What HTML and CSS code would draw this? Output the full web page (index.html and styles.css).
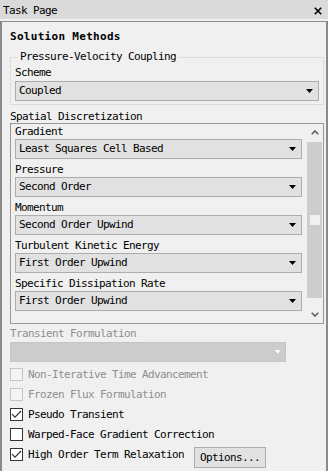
FILE: index.html
```html
<!DOCTYPE html>
<html>
<head>
<meta charset="utf-8">
<link rel="stylesheet" href="styles.css">
</head>
<body>
<div class="titlebar">
  <span class="title">Task Page</span>
  <svg class="close" width="8" height="8" viewBox="0 0 8 8"><path d="M0.8 0.8 L7.2 7.2 M7.2 0.8 L0.8 7.2" stroke="#000" stroke-width="1.6" fill="none"/></svg>
</div>
<div class="panel">
  <div class="heading">Solution Methods</div>
  <fieldset class="group">
    <legend class="legend">Pressure-Velocity Coupling</legend>
    <div class="label first">Scheme</div>
    <div class="combo"><span class="combo-text">Coupled</span><svg class="arrow" width="7" height="4" viewBox="0 0 7 4"><polygon points="0,0 7,0 3.5,4" fill="#000"/></svg></div>
  </fieldset>
  <div class="section-label">Spatial Discretization</div>
  <div class="frame">
    <div class="frame-content">
      <div class="label first">Gradient</div>
      <div class="combo"><span class="combo-text">Least Squares Cell Based</span><svg class="arrow" width="7" height="4" viewBox="0 0 7 4"><polygon points="0,0 7,0 3.5,4" fill="#000"/></svg></div>
      <div class="label">Pressure</div>
      <div class="combo"><span class="combo-text">Second Order</span><svg class="arrow" width="7" height="4" viewBox="0 0 7 4"><polygon points="0,0 7,0 3.5,4" fill="#000"/></svg></div>
      <div class="label">Momentum</div>
      <div class="combo"><span class="combo-text">Second Order Upwind</span><svg class="arrow" width="7" height="4" viewBox="0 0 7 4"><polygon points="0,0 7,0 3.5,4" fill="#000"/></svg></div>
      <div class="label">Turbulent Kinetic Energy</div>
      <div class="combo"><span class="combo-text">First Order Upwind</span><svg class="arrow" width="7" height="4" viewBox="0 0 7 4"><polygon points="0,0 7,0 3.5,4" fill="#000"/></svg></div>
      <div class="label">Specific Dissipation Rate</div>
      <div class="combo"><span class="combo-text">First Order Upwind</span><svg class="arrow" width="7" height="4" viewBox="0 0 7 4"><polygon points="0,0 7,0 3.5,4" fill="#000"/></svg></div>
    </div>
    <div class="scrollbar">
      <div class="sb-btn"><svg width="8" height="5" viewBox="0 0 8 5"><path d="M0.7 4.3 L4 1 L7.3 4.3" stroke="#606060" stroke-width="1.6" fill="none"/></svg></div>
      <div class="thumb"><div class="grip"></div></div>
      <div class="sb-space"></div>
      <div class="sb-btn"><svg width="8" height="5" viewBox="0 0 8 5"><path d="M0.7 0.7 L4 4 L7.3 0.7" stroke="#606060" stroke-width="1.6" fill="none"/></svg></div>
    </div>
  </div>
  <div class="label disabled-text after-frame">Transient Formulation</div>
  <div class="combo combo-disabled"><span class="combo-text"></span><svg class="arrow" width="8" height="5" viewBox="0 0 8 5"><polygon points="0,0 8,0 4,4.5" fill="#b4b4b4"/><polygon points="1,0 8,0 4.5,4" fill="#fafafa"/></svg></div>
  <div class="checks">
    <div class="check-row"><span class="box box-disabled"></span><span class="check-text disabled-text">Non-Iterative Time Advancement</span></div>
    <div class="check-row"><span class="box box-disabled"></span><span class="check-text disabled-text">Frozen Flux Formulation</span></div>
    <div class="check-row"><span class="box"><svg width="11" height="11" viewBox="0 0 11 11"><path d="M1 5.2 L4 8.2 L10 2" stroke="#333" stroke-width="1.2" fill="none"/></svg></span><span class="check-text">Pseudo Transient</span></div>
    <div class="check-row"><span class="box"></span><span class="check-text">Warped-Face Gradient Correction</span></div>
    <div class="check-row"><span class="box"><svg width="11" height="11" viewBox="0 0 11 11"><path d="M1 5.2 L4 8.2 L10 2" stroke="#333" stroke-width="1.2" fill="none"/></svg></span><span class="check-text">High Order Term Relaxation</span><span class="button">Options...</span></div>
  </div>
</div>
</body>
</html>
```
FILE: styles.css
```css
* { box-sizing: border-box; }
html, body { margin: 0; padding: 0; }
body {
  width: 328px;
  height: 471px;
  overflow: hidden;
  background: #f0f0f0;
  font-family: "DejaVu Sans Mono", "Liberation Mono", monospace;
  font-size: 11px;
  letter-spacing: -0.623px;
  color: #000;
}
.titlebar {
  height: 19px;
  background: #dadada;
  display: flex;
  justify-content: space-between;
  align-items: flex-start;
  padding: 4px 6px 0 3px;
  line-height: 14px;
}
.close { margin-top: 3px; }
.panel {
  margin-top: 2px;
  border-top: 1px solid #8a8a8a;
  border-left: 2px solid #8a8a8a;
  border-right: 2px solid #8a8a8a;
  height: 450px;
  padding: 0 2px 0 8px;
}
.heading {
  margin-top: 8px;
  height: 14px;
  line-height: 14px;
  font-weight: bold;
  letter-spacing: 0.3px;
}
.group {
  margin: 6px 0 0 0;
  padding: 0 4px 3px 4px;
  border: 1px solid #dcdcdc;
  min-width: 0;
}
.legend {
  padding: 0 3px;
  margin-left: 2px;
  line-height: 14px;
}
.label {
  height: 14px;
  line-height: 14px;
  margin-top: 4px;
  white-space: nowrap;
}
.group .label.first { margin-top: 2px; margin-bottom: 1px; }
.frame .label.first { margin-top: 1px; }
.combo {
  height: 20px;
  border: 1px solid #adadad;
  background: #e1e1e1;
  display: flex;
  align-items: center;
  justify-content: space-between;
  padding: 0 5px 0 3px;
}
.combo-text { white-space: nowrap; line-height: 14px; }
.section-label {
  margin-top: 5px;
  height: 13px;
  line-height: 13px;
}
.frame {
  height: 201px;
  border: 1px solid #999999;
  display: flex;
}
.frame-content {
  flex: 1;
  padding: 0 4px;
  overflow: hidden;
}
.scrollbar {
  width: 17px;
  display: flex;
  flex-direction: column;
}
.sb-btn {
  height: 17px;
  display: flex;
  align-items: center;
  justify-content: center;
}
.thumb {
  margin: 1px 1px 0 1px;
  height: 156px;
  background: #cdcdcd;
  display: flex;
  align-items: center;
  justify-content: center;
}
.grip {
  width: 10px;
  height: 10px;
  background: #f0f0f0;
}
.sb-space { flex: 1; }
.after-frame { margin-top: 3px; }
.disabled-text { color: #8e8e8e; }
.combo-disabled {
  margin-top: 1px;
  width: 276px;
  background: #cccccc;
  border-color: #c4c4c4;
  padding-right: 4px;
}
.checks {
  margin-top: 2px;
  display: flex;
  flex-direction: column;
}
.check-row {
  height: 20px;
  display: flex;
  align-items: flex-start;
}
.box {
  width: 13px;
  height: 13px;
  margin-top: 4px;
  border: 1px solid #333333;
  background: #ffffff;
  display: flex;
}
.box-disabled {
  border-color: #c6c6c6;
  background: #f4f4f4;
}
.check-text {
  margin-left: 5px;
  margin-top: 4px;
  line-height: 13px;
  white-space: nowrap;
}
.button {
  margin-left: 10px;
  margin-top: 3px;
  width: 72px;
  height: 21px;
  border: 1px solid #adadad;
  background: #e1e1e1;
  padding-left: 5px;
  line-height: 19px;
}
```
